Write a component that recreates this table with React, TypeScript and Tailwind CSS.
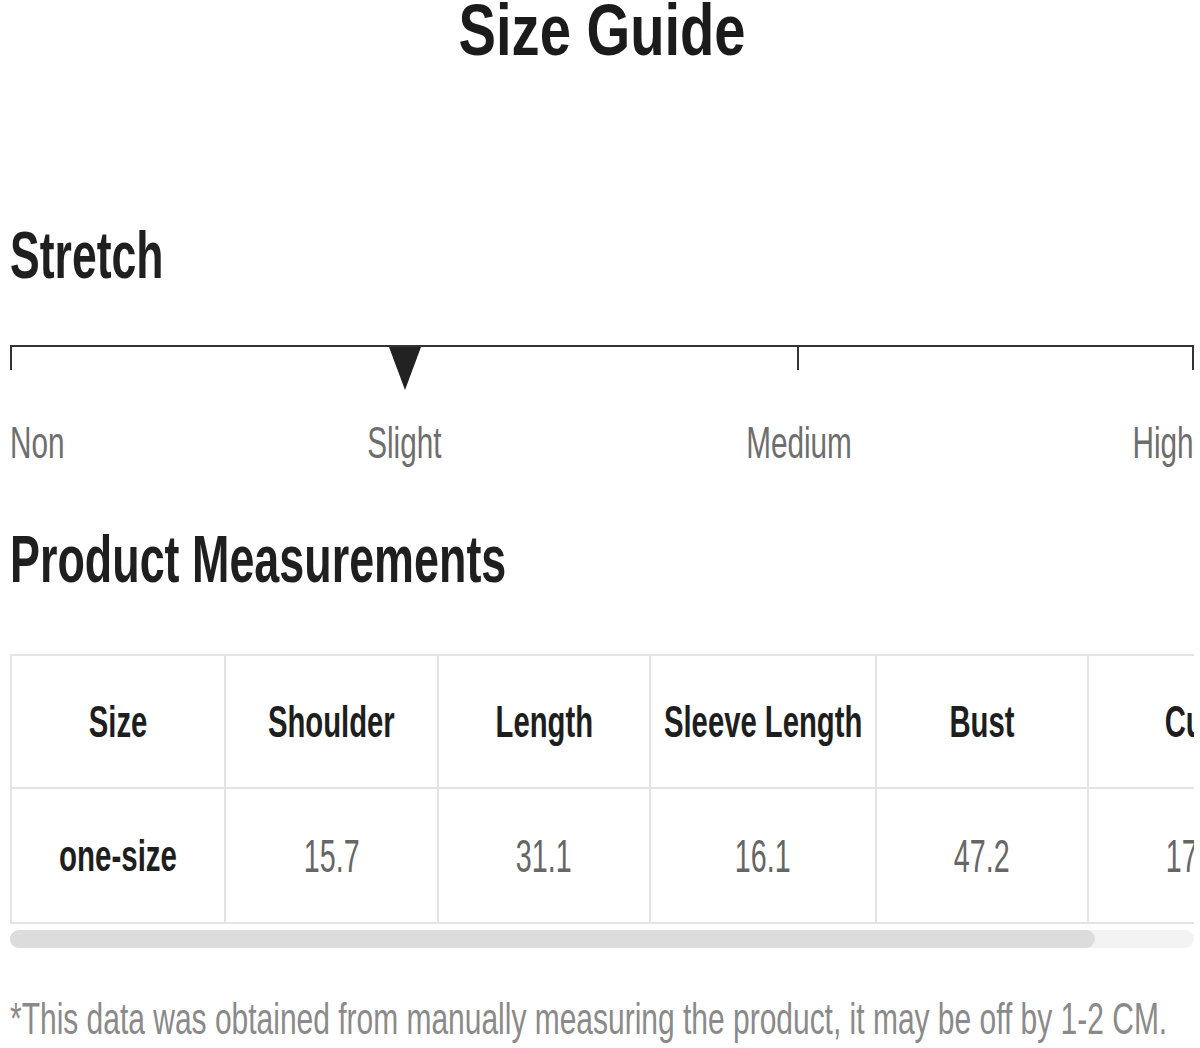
const columns = [
  { head: "Size", value: "one-size", width: "w-[214px]", bold: true },
  { head: "Shoulder", value: "15.7", width: "w-[213px]", bold: false },
  { head: "Length", value: "31.1", width: "w-[212px]", bold: false },
  { head: "Sleeve Length", value: "16.1", width: "w-[226px]", bold: false },
  { head: "Bust", value: "47.2", width: "w-[212px]", bold: false },
  { head: "Cuff", value: "17.3", width: "w-[212px]", bold: false },
];

function StretchScale() {
  return (
    <div className="mt-[57px]">
      <div className="flex h-[25px] border-t-2 border-[#333]">
        <div className="w-[2px] bg-[#333]" />
        <div className="flex-1" />
        <div className="flex w-0 justify-center">
          <svg width="32" height="43" viewBox="0 0 32 43" className="shrink-0">
            <polygon points="0,0 32,0 16,43" fill="#222" />
          </svg>
        </div>
        <div className="flex-1" />
        <div className="w-[2px] bg-[#333]" />
        <div className="flex-1" />
        <div className="w-[2px] bg-[#333]" />
      </div>

      <div className="mt-[50px] flex h-[45px] text-[45px] leading-none text-[#6e6e6e]">
        <div className="flex w-0 justify-start">
          <span className="inline-block origin-left scale-x-[0.66] whitespace-nowrap">Non</span>
        </div>
        <div className="flex-1" />
        <div className="flex w-0 justify-center">
          <span className="inline-block origin-center scale-x-[0.66] whitespace-nowrap">Slight</span>
        </div>
        <div className="flex-1" />
        <div className="flex w-0 justify-center">
          <span className="inline-block origin-center scale-x-[0.66] whitespace-nowrap">Medium</span>
        </div>
        <div className="flex-1" />
        <div className="flex w-0 justify-end">
          <span className="inline-block origin-right scale-x-[0.66] whitespace-nowrap">High</span>
        </div>
      </div>
    </div>
  );
}

function MeasureTable() {
  return (
    <div className="mt-[62px]">
      <div className="overflow-hidden">
        <table className="w-[1289px] table-fixed border-collapse">
          <colgroup>
            {columns.map((c) => (
              <col key={c.head} className={c.width} />
            ))}
          </colgroup>
          <thead>
            <tr>
              {columns.map((c) => (
                <th
                  key={c.head}
                  className="h-[133px] border-2 border-[#e4e4e4] p-0 align-middle text-[44px] font-bold leading-none text-[#1e1e1e]"
                >
                  <div className="flex justify-center">
                    <span className="inline-block shrink-0 origin-center scale-x-[0.665] whitespace-nowrap">{c.head}</span>
                  </div>
                </th>
              ))}
            </tr>
          </thead>
          <tbody>
            <tr>
              {columns.map((c) =>
                c.bold ? (
                  <td
                    key={c.head}
                    className="h-[135px] border-2 border-[#e4e4e4] p-0 align-middle text-[44px] font-bold leading-none text-[#1e1e1e]"
                  >
                    <div className="flex justify-center">
                      <span className="inline-block shrink-0 origin-center scale-x-[0.67] whitespace-nowrap">{c.value}</span>
                    </div>
                  </td>
                ) : (
                  <td
                    key={c.head}
                    className="h-[135px] border-2 border-[#e4e4e4] p-0 align-middle text-[47px] leading-none text-[#666]"
                  >
                    <div className="flex justify-center">
                      <span className="inline-block shrink-0 origin-center scale-x-[0.61] whitespace-nowrap">{c.value}</span>
                    </div>
                  </td>
                )
              )}
            </tr>
          </tbody>
        </table>
      </div>
      <div className="mt-[6px] h-[18px] rounded-full bg-[#f3f3f3]">
        <div className="h-full w-[1085px] rounded-full bg-[#dcdcdc]" />
      </div>
    </div>
  );
}

export default function App() {
  return (
    <div className="min-h-[1048px] bg-white pl-[10px] pr-[6px] font-['Liberation_Sans',Arial,sans-serif]">
      <h1 className="h-[60px] text-center text-[72px] font-bold leading-[60px] text-[#1b1b1b]">
        <span className="inline-block origin-center scale-x-[0.78] whitespace-nowrap">Size Guide</span>
      </h1>

      <h2 className="mt-[162px] h-[66px] text-[66px] font-bold leading-none text-[#1f1f1f]">
        <span className="inline-block origin-left scale-x-[0.675] whitespace-nowrap">Stretch</span>
      </h2>

      <StretchScale />

      <h2 className="mt-[61px] h-[66px] text-[66px] font-bold leading-none text-[#1f1f1f]">
        <span className="inline-block origin-left scale-x-[0.68] whitespace-nowrap">Product Measurements</span>
      </h2>

      <MeasureTable />

      <p className="mt-[48px] text-[45px] leading-none text-[#8a8a8a]">
        <span className="inline-block origin-left scale-x-[0.666] whitespace-nowrap">
          *This data was obtained from manually measuring the product, it may be off by 1-2 CM.
        </span>
      </p>
    </div>
  );
}
